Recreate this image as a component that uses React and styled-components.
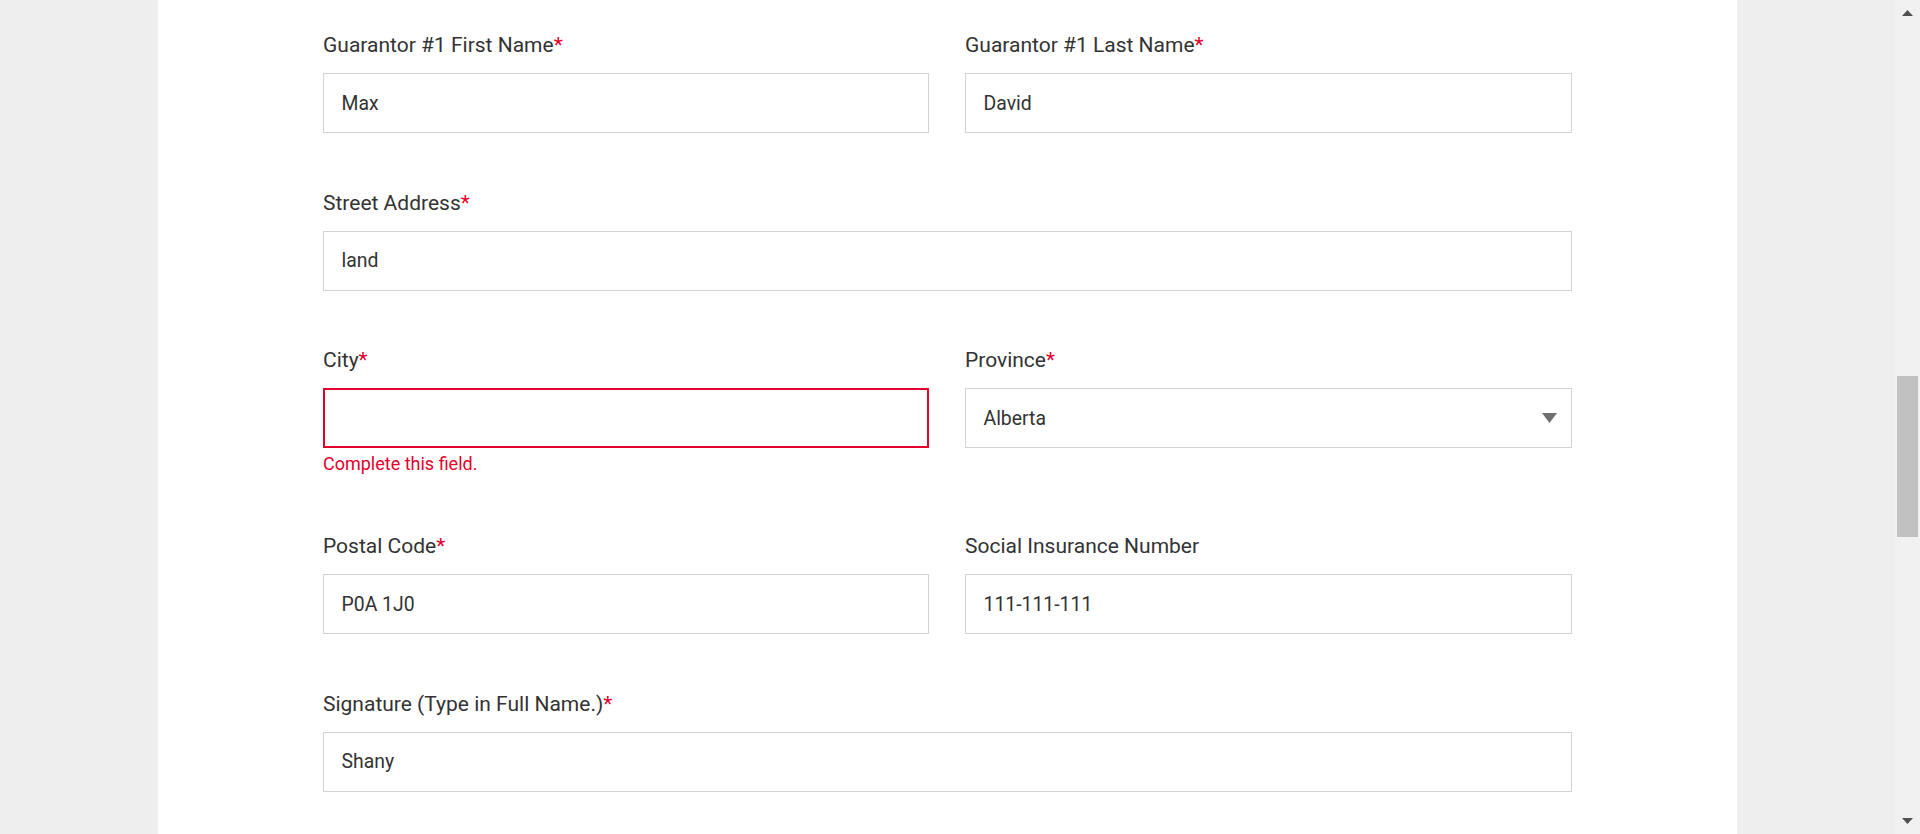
import React from 'react'
import styled, { createGlobalStyle } from 'styled-components'

const GlobalStyle = createGlobalStyle`
    html, body {
        margin: 0;
        padding: 0;
        height: 100%;
        overflow: hidden;
        background: #eeeeee;
        font-family: Roboto, "Liberation Sans", Arial, sans-serif;
    }
    #root {
        height: 100%;
    }
`;

const Page = styled.div`
    display: flex;
    height: 100vh;
`;

const Main = styled.main`
    flex: 1;
    display: flex;
    justify-content: center;
    overflow: hidden;
`;

const Panel = styled.section`
    width: 1579px;
    flex-shrink: 0;
    background: #ffffff;
    box-sizing: border-box;
    padding: 30px 165px 0;
`;

const FormGrid = styled.form`
    display: grid;
    grid-template-columns: 606px 607px;
    column-gap: 36px;
    row-gap: 54.5px;
    align-items: start;
`;

const Field = styled.div`
    display: flex;
    flex-direction: column;
    grid-column: ${p => (p.$wide ? '1 / span 2' : 'auto')};
`;

const Label = styled.label`
    font-size: 21px;
    line-height: 30px;
    color: #333333;
    margin-bottom: 13px;
    span {
        color: #e4002b;
    }
`;

const TextInput = styled.input`
    box-sizing: border-box;
    width: 100%;
    height: 60px;
    margin: 0;
    padding: 0 17.5px;
    border: ${p => (p.$invalid ? '2px solid #e4002b' : '1px solid #d3d3d3')};
    border-radius: 0;
    outline: none;
    background: #ffffff;
    font-family: Roboto, "Liberation Sans", Arial, sans-serif;
    font-size: 19.4px;
    color: #333333;
`;

const SelectBox = styled.div`
    box-sizing: border-box;
    height: 60px;
    display: flex;
    align-items: center;
    justify-content: space-between;
    padding: 0 14px 0 17.5px;
    border: 1px solid #d3d3d3;
    background: #ffffff;
    font-size: 19.4px;
    color: #333333;
    cursor: pointer;
`;

const ErrorText = styled.div`
    font-size: 18px;
    line-height: 22px;
    margin: 5px 0 1.5px;
    color: #e4002b;
`;

const Scrollbar = styled.div`
    width: 25px;
    flex-shrink: 0;
    display: flex;
    flex-direction: column;
    align-items: center;
    background: #f1f1f1;
`;

const ArrowButton = styled.div`
    height: 25px;
    width: 100%;
    display: flex;
    justify-content: center;
    align-items: ${p => (p.$down ? 'flex-end' : 'flex-start')};
    padding: ${p => (p.$down ? '0 0 10px' : '10px 0 0')};
    box-sizing: border-box;
`;

const Track = styled.div`
    flex: 1;
    width: 100%;
    display: flex;
    justify-content: center;
`;

const Thumb = styled.div`
    width: 21px;
    height: 161px;
    margin-top: ${p => p.$offset}px;
    background: #c1c1c1;
`;

const Req = () => <span>*</span>

const fields = [
    { label: 'Guarantor #1 First Name', value: 'Max', req: true },
    { label: 'Guarantor #1 Last Name', value: 'David', req: true },
    { label: 'Street Address', value: 'land', req: true, wide: true },
    { label: 'City', value: '', req: true, error: 'Complete this field.' },
    { label: 'Province', value: 'Alberta', req: true, select: true },
    { label: 'Postal Code', value: 'P0A 1J0', req: true },
    { label: 'Social Insurance Number', value: '111-111-111' },
    { label: 'Signature (Type in Full Name.)', value: 'Shany', req: true, wide: true },
]

function App() {
    return (
        <>
            <GlobalStyle />
            <Page>
                <Main>
                    <Panel>
                        <FormGrid onSubmit={e => e.preventDefault()}>
                            {fields.map(f => (
                                <Field key={f.label} $wide={f.wide}>
                                    <Label>{f.label}{f.req && <Req />}</Label>
                                    {f.select ? (
                                        <SelectBox>
                                            {f.value}
                                            <svg width="15" height="10" viewBox="0 0 15 10">
                                                <path d="M0 0 H15 L7.5 10 Z" fill="#6f6f6f" />
                                            </svg>
                                        </SelectBox>
                                    ) : (
                                        <TextInput type="text" defaultValue={f.value} $invalid={!!f.error} />
                                    )}
                                    {f.error && <ErrorText>{f.error}</ErrorText>}
                                </Field>
                            ))}
                        </FormGrid>
                    </Panel>
                </Main>
                <Scrollbar>
                    <ArrowButton>
                        <svg width="11" height="6" viewBox="0 0 11 6">
                            <path d="M0 6 L5.5 0 L11 6 Z" fill="#505050" />
                        </svg>
                    </ArrowButton>
                    <Track>
                        <Thumb $offset={351} />
                    </Track>
                    <ArrowButton $down>
                        <svg width="11" height="6" viewBox="0 0 11 6">
                            <path d="M0 0 H11 L5.5 6 Z" fill="#505050" />
                        </svg>
                    </ArrowButton>
                </Scrollbar>
            </Page>
        </>
    )
}

export default App
